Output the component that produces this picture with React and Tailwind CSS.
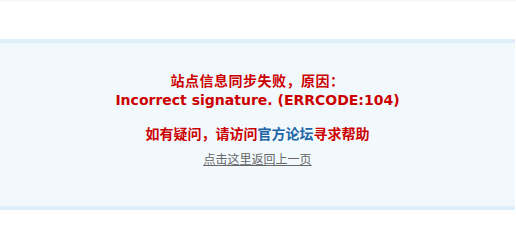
export default function App() {
  // -------- UI --------
  return (
    <div className="w-[516px] h-[230px] bg-white overflow-hidden font-['DejaVu_Sans','Noto_Sans_CJK_SC',sans-serif]">
      {/* faint header edge */}
      <div className="h-[2px] bg-gradient-to-b from-[#eef5fb] to-white" />

      {/* Info box */}
      <div className="mt-[37px] mr-[1px] border-y-4 border-[#deeefa] bg-[#f2f9fd] pt-[28px] pb-[39px] text-center">
        <h4 className="text-[14px] leading-[19px] font-bold text-[#cc0000] mb-[14px]">
          <span className="font-['Noto_Sans_CJK_SC',sans-serif] tracking-[0.5px]">站点信息同步失败，原因：</span>
          <br />
          Incorrect signature. (ERRCODE:104)
        </h4>
        <h4 className="text-[14px] leading-[19px] font-bold text-[#cc0000] mb-[7px] font-['Noto_Sans_CJK_SC',sans-serif]">
          如有疑问，请访问<a href="#" className="text-[#2366a8]">官方论坛</a>寻求帮助
        </h4>
        <p className="text-[12px] leading-[17px] text-[#666666] underline font-['Noto_Sans_CJK_SC',sans-serif]">
          <a href="#">点击这里返回上一页</a>
        </p>
      </div>
    </div>
  );
}
